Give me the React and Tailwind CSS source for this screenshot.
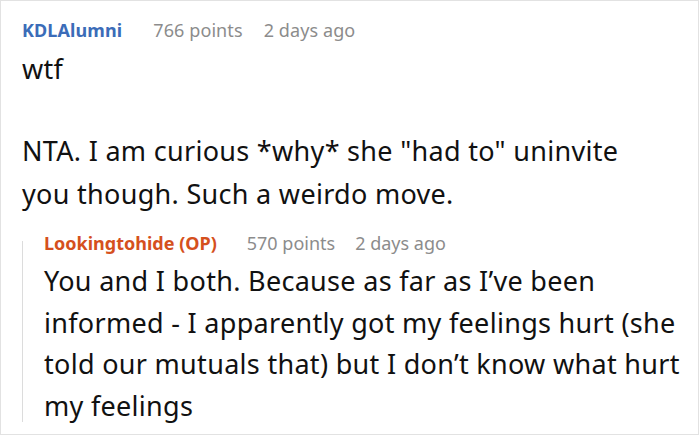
export default function App() {
  return (
    <div
      className="h-[436px] w-[700px] overflow-hidden bg-white"
      style={{ fontFamily: '"Noto Sans", "Open Sans", sans-serif' }}
    >
      <div className="h-[435px] w-[699px] border border-[#e2e2e2] pl-[21px] pr-[8px] pt-[17px]">
        <div className="flex items-baseline text-[18px] leading-[24px] tracking-[0.1px]">
          <span className="font-bold text-[#3b6cb8]">KDLAlumni</span>
          <span className="ml-[31px] text-[#8c8c8c]">766 points</span>
          <span className="ml-[21px] text-[#8c8c8c]">2 days ago</span>
        </div>
        <div className="mt-[5px] max-w-[640px] text-[27px] leading-[43px] tracking-[0.3px] text-[#111]">
          <p>wtf</p>
          <p className="mt-[39px]">NTA. I am curious *why* she "had to" uninvite you though. Such a weirdo move.</p>
        </div>

        <div className="mt-[16px] flex">
          <div className="mb-[4px] mt-[10px] w-px shrink-0 bg-[#dcdcdc]" />
          <div className="pl-[21px]">
            <div className="flex items-baseline text-[18px] leading-[24px]">
              <span className="font-bold text-[#d5501d]">Lookingtohide (OP)</span>
              <span className="ml-[30px] text-[#8c8c8c]">570 points</span>
              <span className="ml-[20px] text-[#8c8c8c]">2 days ago</span>
            </div>
            <p className="mt-[5px] text-[27px] leading-[41.5px] tracking-[0.3px] text-[#111]">
              You and I both. Because as far as I’ve been informed - I apparently got my feelings hurt (she told our mutuals that) but I don’t know what hurt my feelings
            </p>
          </div>
        </div>
      </div>
    </div>
  )
}
